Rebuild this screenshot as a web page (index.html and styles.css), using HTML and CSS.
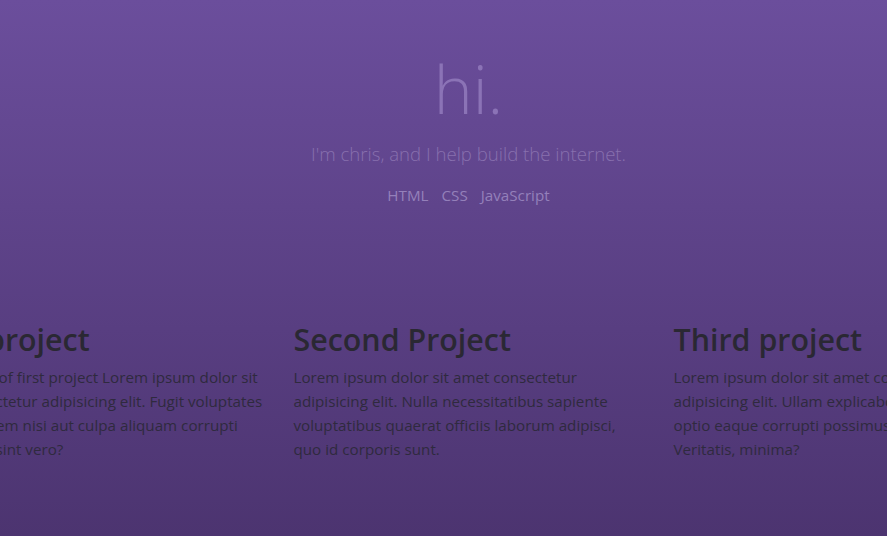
FILE: index.html
```html
<!DOCTYPE html>
<html lang="en">
<head>
<meta charset="utf-8">
<title>hi.</title>
<link rel="stylesheet" href="styles.css">
</head>
<body>
<div class="page">
  <header class="hero">
    <h1 class="hero-title">hi.</h1>
    <p class="hero-sub">I'm chris, and I help build the internet.</p>
    <nav class="hero-links">
      <a href="#">HTML</a>
      <a href="#">CSS</a>
      <a href="#">JavaScript</a>
    </nav>
  </header>
  <section class="projects">
    <article class="project">
      <h2>First project</h2>
      <p>Description of first project Lorem ipsum dolor sit amet consectetur adipisicing elit. Fugit voluptates atque dolorem nisi aut culpa aliquam corrupti eveniet qui sint vero?</p>
    </article>
    <article class="project">
      <h2>Second Project</h2>
      <p>Lorem ipsum dolor sit amet consectetur adipisicing elit. Nulla necessitatibus sapiente voluptatibus quaerat officiis laborum adipisci, quo id corporis sunt.</p>
    </article>
    <article class="project">
      <h2>Third project</h2>
      <p>Lorem ipsum dolor sit amet consectetur adipisicing elit. Ullam explicabo necessitatibus optio eaque corrupti possimus doloremque. Veritatis, minima?</p>
    </article>
  </section>
</div>
</body>
</html>
```
FILE: styles.css
```css
html, body {
  margin: 0;
  padding: 0;
}
body {
  min-height: 100vh;
  overflow: hidden;
  background: linear-gradient(180deg, #6b4e9c 0%, #4c3470 100%);
  font-family: "Open Sans", "Noto Sans", sans-serif;
  color: #2c2a3a;
}
.page {
  padding-left: 50px;
  min-height: 100vh;
  box-sizing: border-box;
}
.hero {
  text-align: center;
  padding-top: 49px;
}
.hero-title {
  margin: 0;
  font-size: 66px;
  line-height: 79px;
  font-weight: 300;
  color: #8b73b6;
}
.hero-sub {
  margin: 12px 0 0;
  font-size: 18.6px;
  line-height: 27px;
  font-weight: 300;
  color: #8870ae;
}
.hero-links {
  margin-top: 17px;
  display: flex;
  justify-content: center;
  gap: 13px;
  font-size: 15.2px;
  line-height: 22px;
}
.hero-links a {
  color: #9480ba;
  text-decoration: none;
}
.projects {
  margin-top: 115px;
  display: grid;
  grid-template-columns: repeat(3, 350px);
  column-gap: 30px;
  justify-content: center;
}
.project h2 {
  margin: 0 0 6px;
  font-size: 30.4px;
  line-height: 38px;
  font-weight: 600;
  color: #2a2833;
  white-space: nowrap;
}
.project p {
  margin: 0;
  font-size: 15.2px;
  line-height: 24px;
  color: #2f2a3e;
}
```
